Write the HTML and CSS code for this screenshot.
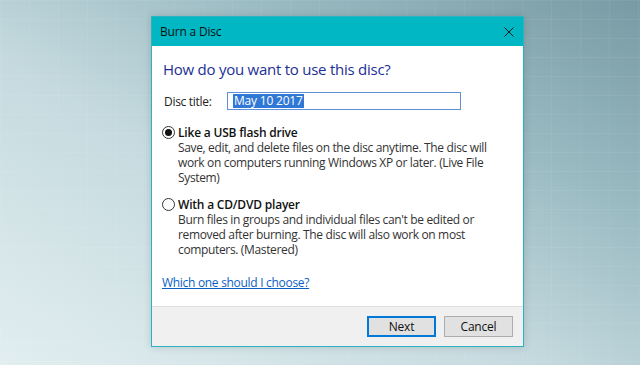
FILE: index.html
```html
<!DOCTYPE html>
<html>
<head>
<meta charset="utf-8">
<link rel="stylesheet" href="styles.css">
</head>
<body>
<div class="dialog">
  <div class="titlebar">
    <span class="title">Burn a Disc</span>
    <svg class="close" width="10" height="10" viewBox="0 0 10 10"><path d="M0.5 0.5L9.5 9.5M9.5 0.5L0.5 9.5" stroke="#1a1a1a" stroke-width="1"/></svg>
  </div>
  <div class="content">
    <h1 class="heading">How do you want to use this disc?</h1>
    <div class="title-row">
      <span class="label">Disc title:</span>
      <div class="input"><span class="sel">May 10 2017</span></div>
    </div>
    <div class="option">
      <div class="opt-head"><span class="radio checked"></span><span class="opt-label">Like a USB flash drive</span></div>
      <p class="desc">Save, edit, and delete files on the disc anytime. The disc will work on computers running Windows XP or later. (Live File System)</p>
    </div>
    <div class="option second">
      <div class="opt-head"><span class="radio"></span><span class="opt-label">With a CD/DVD player</span></div>
      <p class="desc">Burn files in groups and individual files can't be edited or removed after burning. The disc will also work on most computers. (Mastered)</p>
    </div>
    <a class="link" href="#">Which one should I choose?</a>
  </div>
  <div class="footer">
    <button class="btn primary">Next</button>
    <button class="btn">Cancel</button>
  </div>
</div>
</body>
</html>
```
FILE: styles.css
```css
html, body { margin: 0; height: 100%; }
body {
  width: 640px;
  height: 365px;
  overflow: hidden;
  box-sizing: border-box;
  padding: 16px 0 0 151px;
  font-family: "Open Sans", "Noto Sans", sans-serif;
  background:
    repeating-linear-gradient(to bottom, rgba(255,255,255,0.06) 0 1px, transparent 1px 19px),
    repeating-linear-gradient(to right, rgba(255,255,255,0.05) 0 1px, transparent 1px 29px),
    linear-gradient(to top right, #e2eef0 0%, #c5dadf 42%, #98b9c0 72%, #779ba4 100%);
}
.dialog {
  width: 373px;
  height: 331px;
  box-sizing: border-box;
  border: 1px solid #2bb4c0;
  background: #fff;
  display: flex;
  flex-direction: column;
  box-shadow: 0 0 8px rgba(0,0,0,0.15);
}
.titlebar {
  height: 29px;
  background: #00b7c3;
  display: flex;
  align-items: center;
  justify-content: space-between;
  padding: 0 8px 0 8px;
  flex: none;
}
.title { font-size: 12px; color: #111; letter-spacing: -0.2px; }
.close { margin-right: 1px; }
.content {
  flex: 1;
  padding: 13px 0 0 10px;
  font-size: 12px;
  color: #222;
}
.heading {
  margin: 0;
  padding-left: 1px;
  font-weight: normal;
  font-size: 15px;
  line-height: 20px;
  color: #1b2f95;
  letter-spacing: -0.25px;
}
.title-row {
  display: flex;
  align-items: center;
  height: 18px;
  margin-top: 13px;
}
.label { width: 63px; padding-left: 2px; letter-spacing: -0.3px; }
.input {
  width: 234px;
  height: 18px;
  box-sizing: border-box;
  border: 1px solid #5f8fd6;
  display: flex;
  align-items: center;
  padding-left: 5px;
}
.sel {
  background: #3078d6;
  color: #fff;
  line-height: 14px;
  padding: 0 1px;
  letter-spacing: -0.2px;
}
.option { margin-top: 14px; }
.option.second { margin-top: 11px; }
.opt-head { display: flex; align-items: center; height: 16px; }
.radio {
  width: 13px;
  height: 13px;
  border: 1px solid #333;
  border-radius: 50%;
  box-sizing: border-box;
  margin-right: 3px;
  display: flex;
  align-items: center;
  justify-content: center;
  background: #fff;
}
.radio.checked::after {
  content: "";
  width: 7px;
  height: 7px;
  border-radius: 50%;
  background: #111;
}
.opt-label { font-weight: 600; color: #111; letter-spacing: -0.2px; }
.desc {
  margin: 0 0 0 16px;
  width: 320px;
  line-height: 15px;
  letter-spacing: -0.35px;
  color: #333;
}
.link {
  display: inline-block;
  margin-top: 18px;
  color: #0b5fc4;
  text-decoration: underline;
  letter-spacing: -0.3px;
  line-height: 15px;
}
.footer {
  height: 40px;
  flex: none;
  background: #f0f0f0;
  border-top: 1px solid #dfdfdf;
  box-sizing: border-box;
  display: flex;
  justify-content: flex-end;
  align-items: flex-start;
  padding: 9px 10px 0 0;
  gap: 8px;
}
.btn {
  width: 69px;
  height: 21px;
  box-sizing: border-box;
  background: #e1e1e1;
  border: 1px solid #adadad;
  font-family: inherit;
  font-size: 12px;
  color: #111;
  padding: 0;
  letter-spacing: -0.2px;
}
.btn.primary { border: 1px solid #0078d7; box-shadow: inset 0 0 0 1px #0078d7; }
```
